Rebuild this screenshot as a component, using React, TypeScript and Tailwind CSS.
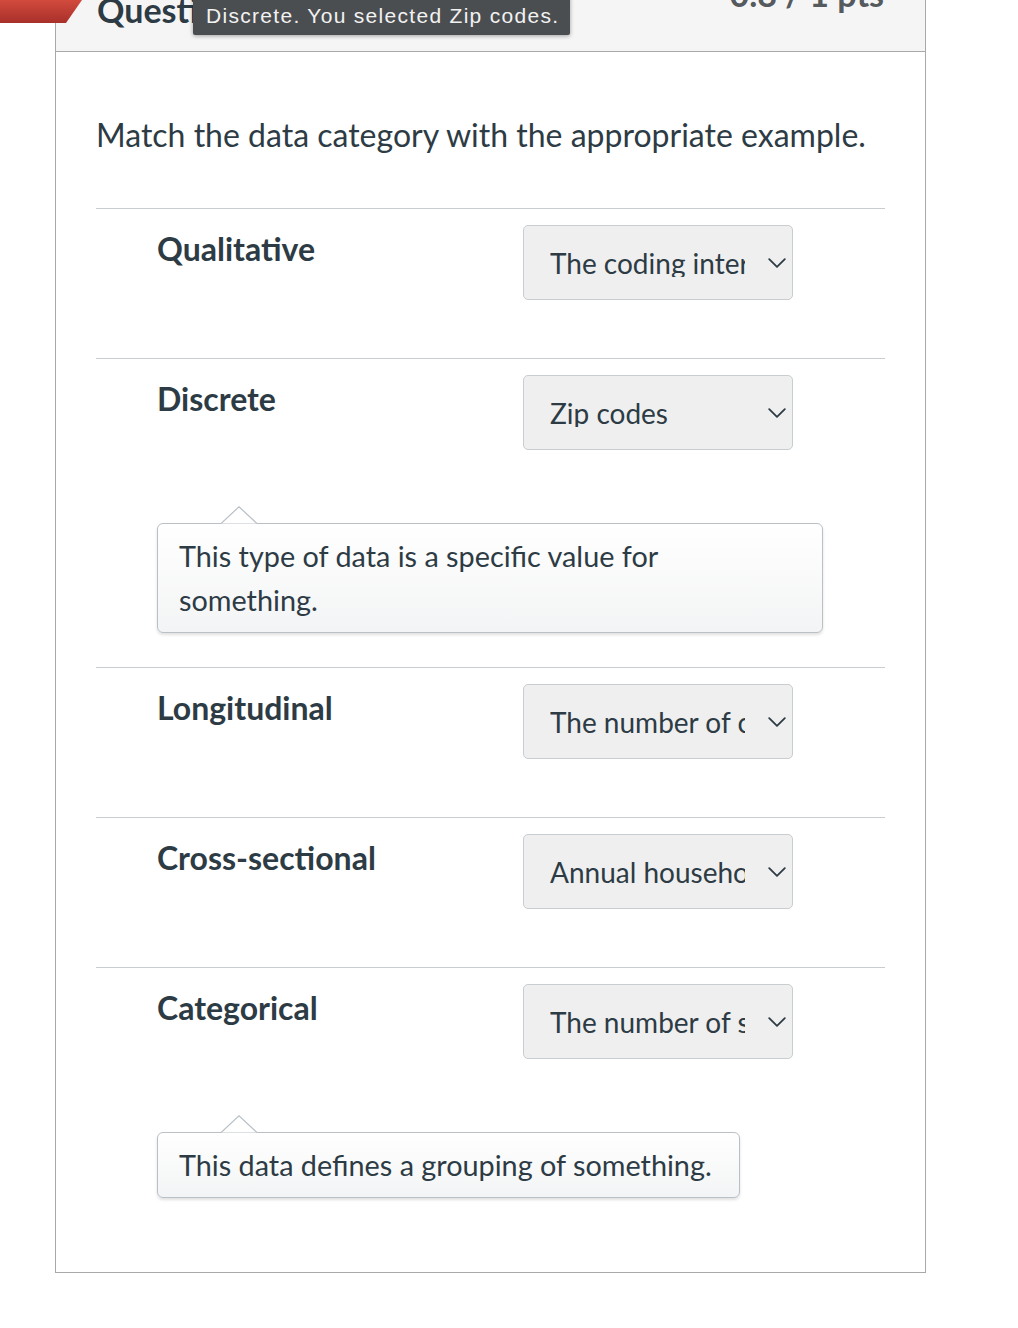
import React from 'react'

const TEXT = '#2d3b45'

type Row = {
  label: string
  answer: string
  hint?: string
  hintWidth?: string
}

const rows: Row[] = [
  { label: 'Qualitative', answer: 'The coding interview responses' },
  {
    label: 'Discrete',
    answer: 'Zip codes',
    hint: 'This type of data is a specific value for something.',
    hintWidth: 'w-[666px]',
  },
  { label: 'Longitudinal', answer: 'The number of customers each month' },
  { label: 'Cross-sectional', answer: 'Annual household income' },
  {
    label: 'Categorical',
    answer: 'The number of students per major',
    hint: 'This data defines a grouping of something.',
    hintWidth: 'w-[583px]',
  },
]

const Chevron = () => (
  <svg width="18" height="10" viewBox="0 0 18 10" fill="none">
    <path d="M1.2 1.2 L9 8.8 L16.8 1.2" stroke={TEXT} strokeWidth="1.8" strokeLinecap="round" strokeLinejoin="round" />
  </svg>
)

const FakeSelect = ({ value }: { value: string }) => (
  <div className="flex h-[75px] w-[270px] items-center rounded-[5px] border border-[#c7cdd1] bg-[#efefef] pl-[26px] pr-[6px]">
    <span className="w-[195px] overflow-hidden whitespace-nowrap text-[28px] leading-none text-[#2d3b45]">{value}</span>
    <span className="ml-auto flex">
      <Chevron />
    </span>
  </div>
)

const Hint = ({ text, width }: { text: string; width?: string }) => (
  <div className={`relative ml-[61px] mt-[73px] ${width ?? ''}`}>
    {/* little pointer on top */}
    <svg className="absolute left-[64px] top-[-17px]" width="36" height="18" viewBox="0 0 36 18">
      <path d="M0 17.5 L18 0.8 L36 17.5" fill="#ffffff" stroke="#b9c0c6" strokeWidth="1.2" />
    </svg>
    <div className="rounded-[6px] border border-[#b9c0c6] bg-gradient-to-b from-white to-[#f3f4f5] px-[21px] py-[10px] shadow-[0_2px_3px_rgba(0,0,0,0.12)]">
      <p className="max-w-[600px] text-[28.8px] leading-[44px] text-[#2d3b45]">{text}</p>
    </div>
  </div>
)

export default function App() {
  return (
    <div className="relative min-h-[1328px] overflow-hidden bg-white font-['Lato','Noto_Sans',sans-serif]">
      {/* red question ribbon */}
      <svg className="absolute left-0 top-0" width="84" height="24" viewBox="0 0 84 24">
        <defs>
          <linearGradient id="rib" x1="0" y1="0" x2="0" y2="1">
            <stop offset="0" stopColor="#d24a3d" />
            <stop offset="1" stopColor="#a8302a" />
          </linearGradient>
        </defs>
        <polygon points="0,0 82,0 66,23 0,23" fill="url(#rib)" />
      </svg>

      {/* screen-reader style tooltip */}
      <div className="absolute left-[193px] top-[-4px] z-10 rounded-[2px] bg-[#4b4e51] pl-[13px] pr-[11px] pb-[6px] pt-[8px] shadow-[0_1px_4px_rgba(0,0,0,0.35)]">
        <span className="font-['Liberation_Sans',Arial,sans-serif] text-[21px] leading-[24px] tracking-[1.3px] text-[#f2f2f2]">
          Discrete. You selected Zip codes.
        </span>
      </div>

      <div className="ml-[55px] mt-[-20px] w-[871px] border border-[#a9a9a9]">
        <div className="flex h-[71px] items-start justify-between border-b border-[#a9a9a9] bg-[#f5f5f5] pl-[41px] pr-[41px] pt-[12px]">
          <span className="text-[34px] font-bold leading-[34px] text-[#2d3b45]">Question 4</span>
          <span className="-mt-[16px] text-[34px] font-bold leading-[34px] text-[#555a5e]">0.8 / 1 pts</span>
        </div>

        <div className="px-[40px] pb-[40px] pt-[63px]">
          <p className="mb-[53px] text-[32px] leading-[40px] text-[#2d3b45]">
            Match the data category with the appropriate example.
          </p>

          {rows.map((r) => (
            <div key={r.label} className="border-t border-[#c7cdd1] pt-[16px]">
              <div className="flex items-start">
                <div className="w-[427px] pl-[61px] pt-[6px] text-[32px] font-bold leading-[36px] text-[#2d3b45]">
                  {r.label}
                </div>
                <FakeSelect value={r.answer} />
              </div>
              {r.hint ? <Hint text={r.hint} width={r.hintWidth} /> : null}
              <div className={r.hint ? 'h-[34px]' : 'h-[58px]'} />
            </div>
          ))}
        </div>
      </div>
    </div>
  )
}
